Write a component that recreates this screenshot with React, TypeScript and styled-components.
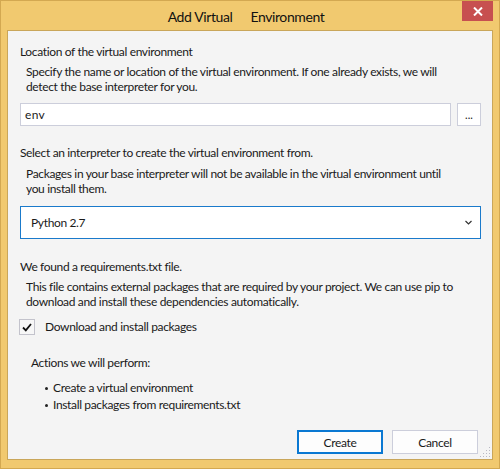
import React from "react";
import styled, { createGlobalStyle } from "styled-components";

const Global = createGlobalStyle`
  html, body { margin: 0; padding: 0; width: 500px; height: 469px; overflow: hidden; background: #f0c86e; }
  * { box-sizing: border-box; }
`;

const Window = styled.div`
  width: 500px;
  height: 469px;
  border: 1px solid #d3a851;
  background: #f1c96f;
  display: flex;
  flex-direction: column;
  padding: 0 6px 8px 6px;
  font-family: Lato, "Liberation Sans", sans-serif;
  color: #1a1a1a;
`;

const TitleBar = styled.div`
  height: 29px;
  display: grid;
  grid-template-columns: 31px 1fr 31px;
  align-items: start;
`;

const Title = styled.div`
  grid-column: 2;
  margin-top: 6px;
  display: flex;
  justify-content: center;
  gap: 18px;
  font-size: 14px;
  line-height: 20px;
  letter-spacing: -0.4px;
  color: #111;
  padding-right: 8px;
`;

const CloseButton = styled.div`
  grid-column: 3;
  width: 31px;
  height: 20px;
  margin-right: -1px;
  background: #c75050;
  display: flex;
  align-items: center;
  justify-content: center;
`;

const Panel = styled.div`
  flex: 1;
  position: relative;
  border: 1px solid #c9a65a;
  background: #f4f4f4;
  display: flex;
  flex-direction: column;
  padding: 13px 11px 5px 12px;
  font-size: 12px;
  letter-spacing: -0.35px;
`;

const Heading = styled.div<{ $mt?: number }>`
  line-height: 15px;
  margin-top: ${(p) => p.$mt ?? 0}px;
  white-space: nowrap;
`;

const Desc = styled.div<{ $mt?: number }>`
  line-height: 15px;
  margin-top: ${(p) => p.$mt ?? 5}px;
  padding-left: 6px;
  white-space: nowrap;
`;

const InputRow = styled.div`
  display: flex;
  gap: 6px;
  margin-top: 9px;
`;

const TextInput = styled.div`
  flex: 1;
  height: 23px;
  background: #fff;
  border: 1px solid #cccedb;
  padding-left: 4px;
  display: flex;
  align-items: center;
  font-size: 12px;
  letter-spacing: 0.3px;
`;

const SmallButton = styled.div`
  width: 24px;
  height: 23px;
  background: #fff;
  border: 1px solid #cccedb;
  display: flex;
  justify-content: center;
  align-items: flex-end;
  padding-bottom: 5px;
  font-size: 11px;
  line-height: 10px;
  letter-spacing: 0;
`;

const Select = styled.div`
  margin-top: 10px;
  height: 33px;
  background: #fff;
  border: 1px solid #1a7acb;
  display: flex;
  align-items: center;
  justify-content: space-between;
  padding: 0 8px 0 10px;
  font-size: 12px;
`;

const CheckRow = styled.div`
  margin-top: 10px;
  margin-left: -1px;
  display: flex;
  align-items: center;
  gap: 10px;
  height: 16px;
  line-height: 16px;
`;

const CheckBox = styled.div`
  width: 16px;
  height: 16px;
  border: 1px solid #c3c3cc;
  background: #f7f7f7;
  display: flex;
  align-items: center;
  justify-content: center;
`;

const ActionsHeading = styled.div`
  margin-top: 20px;
  padding-left: 11px;
  line-height: 15px;
`;

const BulletList = styled.div`
  margin-top: 9px;
  display: flex;
  flex-direction: column;
`;

const BulletItem = styled.div`
  display: flex;
  align-items: center;
  line-height: 17px;
  padding-left: 25px;
  gap: 5px;
`;

const Dot = styled.span`
  width: 3px;
  height: 3px;
  border-radius: 50%;
  background: #222;
  margin-top: 1px;
`;

const ButtonRow = styled.div`
  margin-top: auto;
  display: flex;
  justify-content: flex-end;
  gap: 9px;
  margin-right: 3px;
`;

const DialogButton = styled.div<{ $primary?: boolean }>`
  width: 86px;
  height: 24px;
  background: #fdfdfd;
  border: ${(p) => (p.$primary ? "2px solid #0a78d2" : "1px solid #cccedb")};
  display: flex;
  align-items: center;
  justify-content: center;
  font-size: 12px;
`;

const Grip = styled.svg`
  position: absolute;
  right: 1px;
  bottom: 1px;
`;

export default function App() {
  return (
    <>
      <Global />
      <Window>
        <TitleBar>
          <Title>
            <span>Add Virtual</span>
            <span>Environment</span>
          </Title>
          <CloseButton>
            <svg width="10" height="9" viewBox="0 0 10 9">
              <path d="M1 0.5 L9 8.5 M9 0.5 L1 8.5" stroke="#fff" strokeWidth="2" />
            </svg>
          </CloseButton>
        </TitleBar>
        <Panel>
          <Heading>Location of the virtual environment</Heading>
          <Desc>
            Specify the name or location of the virtual environment. If one already exists, we will
            <br />
            detect the base interpreter for you.
          </Desc>
          <InputRow>
            <TextInput>env</TextInput>
            <SmallButton>...</SmallButton>
          </InputRow>
          <Heading $mt={19}>Select an interpreter to create the virtual environment from.</Heading>
          <Desc $mt={6}>
            Packages in your base interpreter will not be available in the virtual environment until
            <br />
            you install them.
          </Desc>
          <Select>
            <span>Python 2.7</span>
            <svg width="7" height="5" viewBox="0 0 7 5">
              <path d="M0.5 1 L3.5 4 L6.5 1" stroke="#333" strokeWidth="1.2" fill="none" />
            </svg>
          </Select>
          <Heading $mt={20}>We found a requirements.txt file.</Heading>
          <Desc>
            This file contains external packages that are required by your project. We can use pip to
            <br />
            download and install these dependencies automatically.
          </Desc>
          <CheckRow>
            <CheckBox>
              <svg width="10" height="9" viewBox="0 0 10 9">
                <path d="M1 4.5 L3.8 7.3 L9 1" stroke="#111" strokeWidth="1.8" fill="none" />
              </svg>
            </CheckBox>
            <span>Download and install packages</span>
          </CheckRow>
          <ActionsHeading>Actions we will perform:</ActionsHeading>
          <BulletList>
            <BulletItem>
              <Dot />
              <span>Create a virtual environment</span>
            </BulletItem>
            <BulletItem>
              <Dot />
              <span>Install packages from requirements.txt</span>
            </BulletItem>
          </BulletList>
          <ButtonRow>
            <DialogButton $primary>Create</DialogButton>
            <DialogButton>Cancel</DialogButton>
          </ButtonRow>
          <Grip width="12" height="12" viewBox="0 0 12 12">
            {[
              [10, 1],
              [7, 4],
              [10, 4],
              [4, 7],
              [7, 7],
              [10, 7],
              [1, 10],
              [4, 10],
              [7, 10],
              [10, 10],
            ].map(([x, y], i) => (
              <rect key={i} x={x} y={y} width="1" height="1" fill="#b9b9c4" />
            ))}
          </Grip>
        </Panel>
      </Window>
    </>
  );
}
